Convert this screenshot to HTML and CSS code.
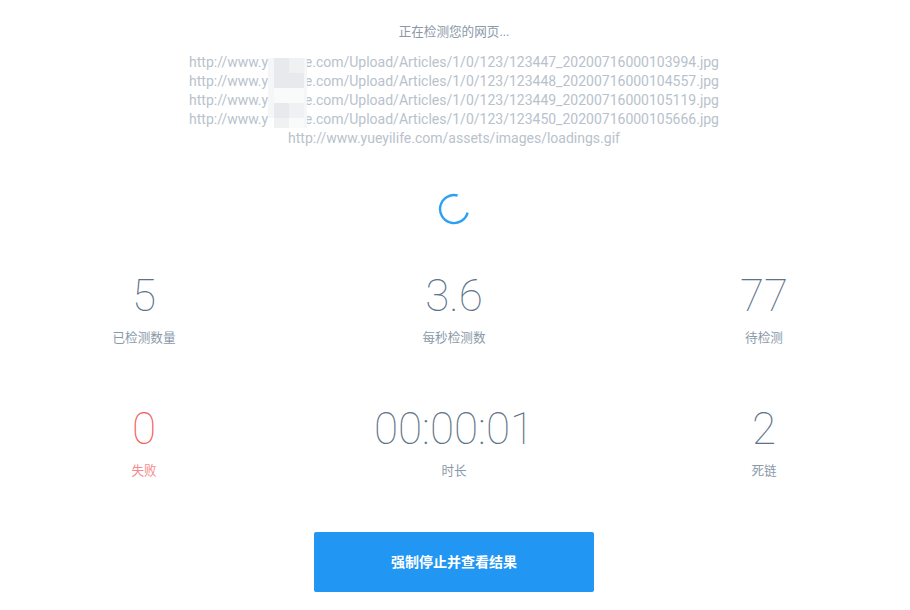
FILE: index.html
```html
<!DOCTYPE html>
<html lang="zh-CN">
<head>
  <meta charset="UTF-8">
  <title>正在检测您的网页</title>
  <link rel="stylesheet" href="styles.css">
</head>
<body>
  <div class="page">
    <p class="title">正在检测您的网页...</p>
    <div class="urls">
      <div>http://www.yueyilife.com/Upload/Articles/1/0/123/123447_20200716000103994.jpg</div>
      <div>http://www.yueyilife.com/Upload/Articles/1/0/123/123448_20200716000104557.jpg</div>
      <div>http://www.yueyilife.com/Upload/Articles/1/0/123/123449_20200716000105119.jpg</div>
      <div>http://www.yueyilife.com/Upload/Articles/1/0/123/123450_20200716000105666.jpg</div>
      <div>http://www.yueyilife.com/assets/images/loadings.gif</div>
      <div class="mosaic">
        <i class="m1"></i><i class="m4"></i><i class="m3"></i><i class="m1"></i>
        <i class="m1"></i><i class="m4"></i><i class="m4"></i><i class="m1"></i>
        <i class="m1"></i><i class="m2"></i><i class="m2"></i><i class="m1"></i>
        <i class="m1"></i><i class="m4"></i><i class="m3"></i><i class="m1"></i>
        <i class="m0"></i><i class="m3"></i><i class="m2"></i><i class="m1"></i>
      </div>
    </div>
    <div class="spinner-row">
      <svg width="32" height="32" viewBox="0 0 32 32">
        <path d="M19.6 2.5A14 14 0 1 0 29.6 19.6" fill="none" stroke="#2ba0f5" stroke-width="2.4"/>
      </svg>
    </div>
    <div class="stats">
      <div class="stat"><div class="num">5</div><div class="label">已检测数量</div></div>
      <div class="stat"><div class="num">3.6</div><div class="label">每秒检测数</div></div>
      <div class="stat"><div class="num">77</div><div class="label">待检测</div></div>
      <div class="stat fail"><div class="num">0</div><div class="label">失败</div></div>
      <div class="stat"><div class="num">00:00:01</div><div class="label">时长</div></div>
      <div class="stat"><div class="num">2</div><div class="label">死链</div></div>
    </div>
    <div class="actions">
      <button class="stop">强制停止并查看结果</button>
    </div>
  </div>
</body>
</html>
```

FILE: styles.css
```css
* {
  box-sizing: border-box;
  margin: 0;
  padding: 0;
}

body {
  background: #fff;
  font-family: Roboto, "Noto Sans CJK SC", sans-serif;
  overflow: hidden;
}

.page {
  width: 908px;
  padding-top: 22px;
}

.title {
  font-size: 12.6px;
  line-height: 19px;
  color: #8a99a8;
  text-align: center;
}

.urls {
  position: relative;
  margin-top: 12px;
  font-size: 14px;
  line-height: 19px;
  color: #b8c2cc;
  text-align: center;
}

.mosaic {
  position: absolute;
  left: 268px;
  top: 2px;
  width: 39px;
  border-top: 3px solid #fff;
  display: grid;
  grid-template-columns: 6px 15px 15px 3px;
  grid-template-rows: 15px 15px 15px 15px 10px;
}

.m0 { background: #fff; }
.m1 { background: #f5f6f7; }
.m2 { background: #f9fafa; }
.m3 { background: #f0f1f3; }
.m4 { background: #e7e9ec; }

.spinner-row {
  display: flex;
  justify-content: center;
  margin-top: 45px;
  height: 32px;
}

.stats {
  display: grid;
  grid-template-columns: repeat(3, 200px);
  justify-content: space-between;
  row-gap: 55px;
  padding: 0 44px;
  margin-top: 44px;
}

.stat {
  text-align: center;
  color: #5d7389;
}

.num {
  font-size: 44px;
  font-weight: 100;
  line-height: 54px;
}

.label {
  margin-top: 5px;
  font-size: 12.6px;
  line-height: 19px;
  color: #8a99a8;
}

.fail .num {
  color: #f25c5c;
}

.fail .label {
  color: #f58a8a;
}

.actions {
  display: flex;
  justify-content: center;
  margin-top: 52px;
}

.stop {
  width: 280px;
  height: 60px;
  padding-bottom: 3px;
  border: none;
  border-radius: 2px;
  background: #2196f3;
  color: #fff;
  font-family: inherit;
  font-size: 14px;
  font-weight: 700;
}
```
